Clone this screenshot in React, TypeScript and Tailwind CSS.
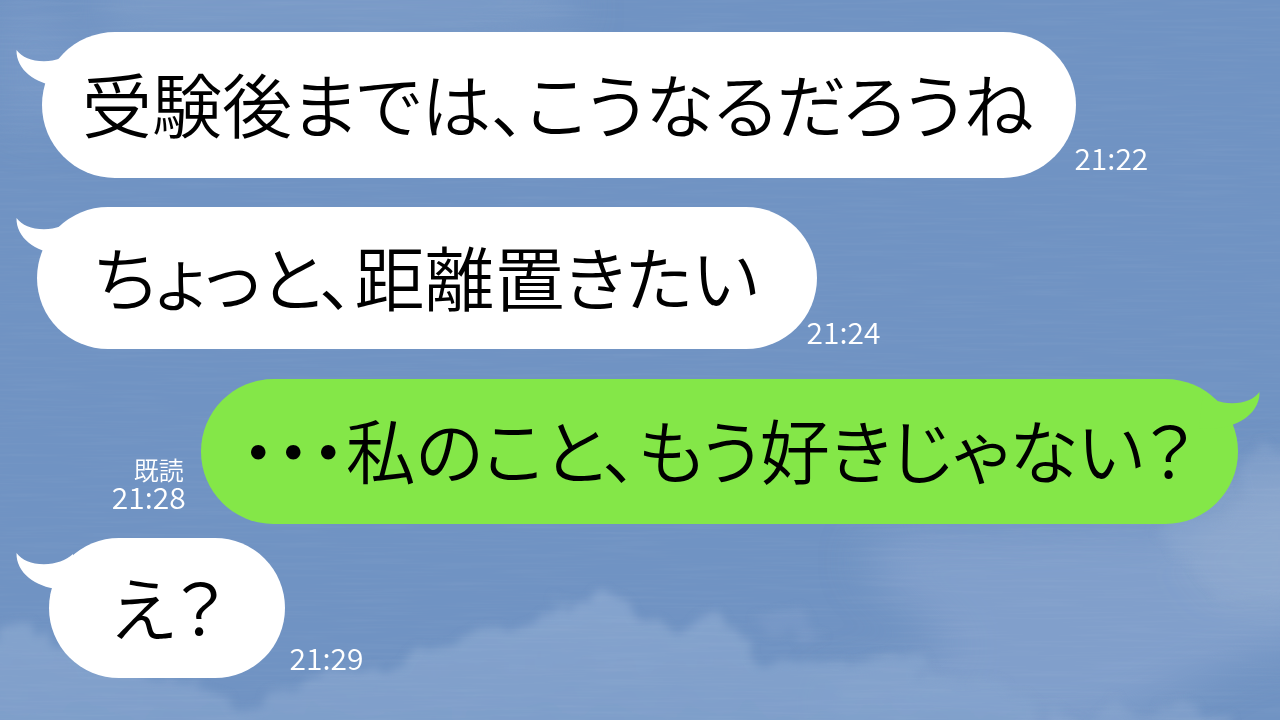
import clsx from "clsx"

type Message = {
  id: number
  text: string
  time: string
  mine?: boolean
  row: string
  bubble: string
  tail: string
  meta: string
}

const messages: Message[] = [
  {
    id: 1,
    text: "受験後までは、こうなるだろうね",
    time: "21:22",
    row: "mt-8 pl-[42px]",
    bubble: "h-[146px] pl-10 pr-[43px]",
    tail: "top-[18px]",
    meta: "mb-[6px] -ml-[2px]",
  },
  {
    id: 2,
    text: "ちょっと、距離置きたい",
    time: "21:24",
    row: "mt-[29px] pl-[37px]",
    bubble: "h-[142px] pl-[57px] pr-[59px]",
    tail: "top-[11px]",
    meta: "mb-[3px] -ml-[11px]",
  },
  {
    id: 3,
    text: "・・・私のこと、もう好きじゃない？",
    time: "21:28",
    mine: true,
    row: "mt-[30px] pr-[42px]",
    bubble: "h-[145px] pl-10 pr-11",
    tail: "top-[13px]",
    meta: "mb-[13px] mr-[15px]",
  },
  {
    id: 4,
    text: "え？",
    time: "21:29",
    row: "mt-[14px] pl-[49px]",
    bubble: "h-[140px] pl-[62px] pr-[60px]",
    tail: "top-[15px]",
    meta: "mb-[6px] ml-[5px]",
  },
]

function Tail({ mine, className }: { mine?: boolean; className: string }) {
  return (
    <svg
      aria-hidden="true"
      viewBox="0 0 62 40"
      className={clsx(
        "absolute h-10 w-[62px]",
        mine ? "right-5 -scale-x-100 fill-[#84e748]" : "left-4 fill-white",
        className
      )}
    >
      <path d="M0.5 0 C6 7 15 11.3 28 11.3 C40 11.3 50 7 57 1 L61 37 L42 36 C20 34 0 20 0.5 0 Z" />
    </svg>
  )
}

function Sky() {
  return (
    <svg
      aria-hidden="true"
      viewBox="0 0 1280 720"
      preserveAspectRatio="xMidYMid slice"
      className="absolute inset-0 -z-10 h-full w-full"
    >
      <defs>
        <filter id="cloud" x="-20%" y="-20%" width="140%" height="140%">
          <feTurbulence type="fractalNoise" baseFrequency="0.03" numOctaves="5" seed="7" result="noise" />
          <feDisplacementMap in="SourceGraphic" in2="noise" scale="40" xChannelSelector="R" yChannelSelector="G" />
          <feGaussianBlur stdDeviation="4" />
        </filter>
        <filter id="haze" x="-40%" y="-40%" width="180%" height="180%">
          <feGaussianBlur stdDeviation="22" />
        </filter>
        <filter id="streaks" x="0" y="0" width="100%" height="100%">
          <feTurbulence type="fractalNoise" baseFrequency="0.012 0.35" numOctaves="2" seed="3" />
          <feColorMatrix values="0 0 0 0 1  0 0 0 0 1  0 0 0 0 1  0.5 0 0 0 -0.19" />
        </filter>
        <linearGradient id="fade" x1="0" y1="0" x2="0" y2="1">
          <stop offset="0" stopColor="#8ba8d0" />
          <stop offset="1" stopColor="#82a1cb" />
        </linearGradient>
      </defs>
      <rect width="1280" height="720" fill="#7093c3" />

      <g filter="url(#haze)">
        <path d="M90 -30 L560 -30 L580 20 L480 40 L110 40 Z" fill="#7d9dc9" opacity="0.8" />
        <path d="M0 0 L40 0 L90 60 L60 130 L0 120 Z" fill="#7d9dc9" opacity="0.6" />
        <path d="M860 560 L900 530 L1220 520 L1320 450 L1320 640 L1240 660 L1100 730 L840 730 L820 690 L960 650 L900 600 Z" fill="#86a3cd" opacity="0.8" />
        <ellipse cx="1265" cy="540" rx="80" ry="70" fill="#94add1" opacity="0.6" />
      </g>

      <g filter="url(#cloud)">
        <path
          d="M-20 632 L20 630 L45 634 L60 645 L110 668 L195 680 L215 694 L240 708 L280 690 L330 674 L400 668 L420 652 L480 634 L520 618 L560 602 L605 596 L630 610 L645 620 L675 624 L715 608 L732 625 L745 645 L765 668 L800 658 L880 660 L960 672 L1030 700 L1060 740 L-20 740 Z"
          fill="url(#fade)"
          opacity="0.8"
        />
        <path d="M750 628 L775 612 L800 612 L825 630 L790 636 Z" fill="#7f9eca" opacity="0.5" />
        <path d="M1160 530 L1240 510 L1250 448 L1320 440 L1320 600 L1220 600 Z" fill="#8ba8d0" opacity="0.4" />
        <path d="M1020 724 L1100 706 L1190 708 L1240 730 L1020 740 Z" fill="#88a5ce" opacity="0.6" />
      </g>

      <rect width="1280" height="720" filter="url(#streaks)" opacity="0.16" />
    </svg>
  )
}

export default function App() {
  return (
    <main className="relative isolate min-h-screen overflow-hidden bg-[#7093c3] font-['Noto_Sans_CJK_JP',sans-serif] font-[350]">
      <Sky />
      <ol className="flex flex-col pb-10">
        {messages.map((m) => (
          <li key={m.id} className={clsx("relative flex items-end", m.mine && "flex-row-reverse", m.row)}>
            <Tail mine={m.mine} className={m.tail} />
            <p
              className={clsx(
                "flex shrink-0 items-center rounded-full pb-[5px] text-[70px] leading-none whitespace-nowrap text-black [font-feature-settings:'palt']",
                m.mine ? "bg-[#84e748]" : "bg-white",
                m.bubble
              )}
            >
              {m.text}
            </p>
            <div className={clsx("flex shrink-0 flex-col text-white", m.mine && "items-end", m.meta)}>
              {m.mine && <span className="pr-0.5 text-[25px] leading-6">既読</span>}
              <time className="text-[30px] leading-[30px]">{m.time}</time>
            </div>
          </li>
        ))}
      </ol>
    </main>
  )
}
